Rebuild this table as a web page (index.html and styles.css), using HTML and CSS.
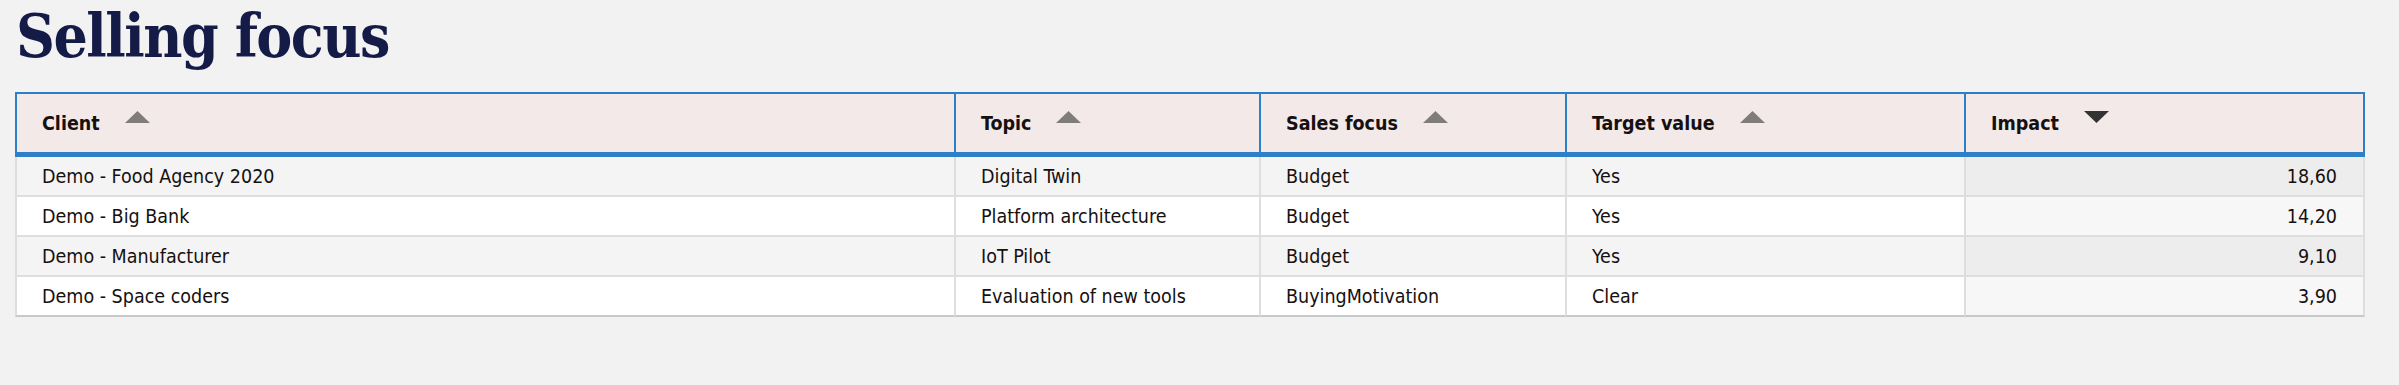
FILE: index.html
```html
<!DOCTYPE html>
<html lang="en">
<head>
<meta charset="utf-8">
<title>Selling focus</title>
<link rel="stylesheet" href="styles.css">
</head>
<body>
<div class="page">
  <h1 class="title">Selling focus</h1>
  <div class="grid">
    <div class="hcell">Client<svg class="sort" width="25" height="12" viewBox="0 0 25 12"><polygon points="0,12 12.5,0 25,12"/></svg></div>
    <div class="hcell">Topic<svg class="sort" width="25" height="12" viewBox="0 0 25 12"><polygon points="0,12 12.5,0 25,12"/></svg></div>
    <div class="hcell">Sales focus<svg class="sort" width="25" height="12" viewBox="0 0 25 12"><polygon points="0,12 12.5,0 25,12"/></svg></div>
    <div class="hcell">Target value<svg class="sort" width="25" height="12" viewBox="0 0 25 12"><polygon points="0,12 12.5,0 25,12"/></svg></div>
    <div class="hcell last">Impact<svg class="sort active" width="25" height="12" viewBox="0 0 25 12"><polygon points="0,0 25,0 12.5,12"/></svg></div>

    <div class="cell odd">Demo - Food Agency 2020</div>
    <div class="cell odd">Digital Twin</div>
    <div class="cell odd">Budget</div>
    <div class="cell odd">Yes</div>
    <div class="cell num odd last">18,60</div>

    <div class="cell even">Demo - Big Bank</div>
    <div class="cell even">Platform architecture</div>
    <div class="cell even">Budget</div>
    <div class="cell even">Yes</div>
    <div class="cell num even last">14,20</div>

    <div class="cell odd">Demo - Manufacturer</div>
    <div class="cell odd">IoT Pilot</div>
    <div class="cell odd">Budget</div>
    <div class="cell odd">Yes</div>
    <div class="cell num odd last">9,10</div>

    <div class="cell even bottom">Demo - Space coders</div>
    <div class="cell even bottom">Evaluation of new tools</div>
    <div class="cell even bottom">BuyingMotivation</div>
    <div class="cell even bottom">Clear</div>
    <div class="cell num even last bottom">3,90</div>
  </div>
</div>
</body>
</html>
```

FILE: styles.css
```css
* { box-sizing: border-box; }

html, body {
  margin: 0;
  padding: 0;
  background: #f2f2f2;
}

.page {
  padding: 0 0 0 15px;
}

.title {
  margin: 0;
  padding: 1px 0 0 1px;
  height: 92px;
  font-family: "DejaVu Serif Condensed", "DejaVu Serif", "Liberation Serif", serif;
  font-stretch: condensed;
  font-weight: bold;
  font-size: 60px;
  line-height: 70px;
  letter-spacing: -1.5px;
  color: #141b47;
}

.grid {
  display: grid;
  grid-template-columns: 939px 305px 306px 399px 401px;
  font-family: "DejaVu Sans Condensed", "DejaVu Sans", sans-serif;
  font-stretch: condensed;
  font-size: 19.5px;
  color: #161010;
}

.hcell {
  height: 65px;
  display: flex;
  align-items: center;
  gap: 25px;
  padding: 0 25px;
  background: #f2e9e8;
  border-top: 2px solid #2d7fc8;
  border-bottom: 5px solid #2d7fc8;
  border-left: 2px solid #2d7fc8;
  font-weight: bold;
}

.hcell.last {
  border-right: 2px solid #2d7fc8;
}

.sort {
  margin-bottom: 12px;
  fill: #807c7b;
  flex: none;
}

.sort.active {
  fill: #333333;
}

.cell {
  height: 40px;
  display: flex;
  align-items: center;
  padding: 0 25px;
  border-left: 2px solid #dedede;
  border-bottom: 2px solid #dedede;
}

.cell.last {
  border-right: 2px solid #dedede;
}

.cell.bottom {
  border-bottom-color: #c8c8c8;
}

.cell.odd { background: #f4f4f4; }
.cell.even { background: #ffffff; }
.cell.num.odd { background: #ededed; }
.cell.num.even { background: #f7f7f7; }

.cell.num {
  justify-content: flex-end;
  padding-right: 26px;
}
```
